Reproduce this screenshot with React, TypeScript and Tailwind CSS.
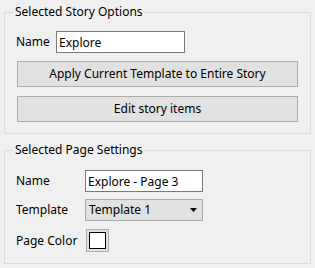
import React, { useState } from 'react';

const FONT = { fontFamily: '"Noto Sans", "Open Sans", sans-serif' };

const GroupBox: React.FC<{ title: string; className?: string; children: React.ReactNode }> = ({ title, className, children }) => (
  <fieldset className={`ml-[4px] w-[307px] border border-[#dcdcdc] px-[8px] ${className ?? ''}`}>
    <legend className="px-[2px] text-[12px] leading-[16px] text-black">{title}</legend>
    {children}
  </fieldset>
);

const App: React.FC = () => {
  const [storyName, setStoryName] = useState('Explore');
  const [pageName, setPageName] = useState('Explore - Page 3');

  return (
    <div className="h-[268px] w-[315px] overflow-hidden bg-[#f0f0f0] pt-[4px] text-[12px] text-black" style={FONT}>
      <GroupBox title="Selected Story Options" className="pt-[11px] pb-[11px]">
        <div className="flex items-center pl-[3px]">
          <span className="w-[40px] leading-[16px]">Name</span>
          <input
            value={storyName}
            onChange={(e) => setStoryName(e.target.value)}
            className="h-[22px] w-[129px] border border-[#7a7a7a] bg-white px-[2px] text-[12px] outline-none"
          />
        </div>
        <div className="pl-[4px] pr-[4px]">
          <button className="mt-[8px] h-[26px] w-[281px] border border-[#adadad] bg-[#e1e1e1] text-[12px]">
            Apply Current Template to Entire Story
          </button>
          <button className="mt-[9px] h-[26px] w-[281px] border border-[#adadad] bg-[#e1e1e1] text-[12px]">
            Edit story items
          </button>
        </div>
      </GroupBox>

      <GroupBox title="Selected Page Settings" className="mt-[8px] pt-[12px] pb-[11px]">
        <div className="flex flex-col gap-[7px] pl-[3px]">
          <div className="flex items-center">
            <span className="w-[69px] leading-[16px]">Name</span>
            <input
              value={pageName}
              onChange={(e) => setPageName(e.target.value)}
              className="h-[22px] w-[118px] border border-[#7a7a7a] bg-white px-[2px] text-[12px] outline-none"
            />
          </div>
          <div className="flex items-center">
            <span className="w-[69px] leading-[16px]">Template</span>
            <div className="flex h-[22px] w-[118px] items-center justify-between border border-[#adadad] bg-[#e1e1e1] pl-[3px] pr-[5px]">
              <span>Template 1</span>
              <svg width="7" height="4" viewBox="0 0 7 4">
                <path d="M0 0h7L3.5 4z" fill="#000" />
              </svg>
            </div>
          </div>
          <div className="mt-[1px] flex items-center">
            <span className="w-[70px] leading-[16px]">Page Color</span>
            <div className="flex h-[23px] w-[23px] items-center justify-center border border-[#adadad] bg-[#e1e1e1]">
              <div className="h-[17px] w-[17px] border border-black bg-white" />
            </div>
          </div>
        </div>
      </GroupBox>
    </div>
  );
};

export default App;
